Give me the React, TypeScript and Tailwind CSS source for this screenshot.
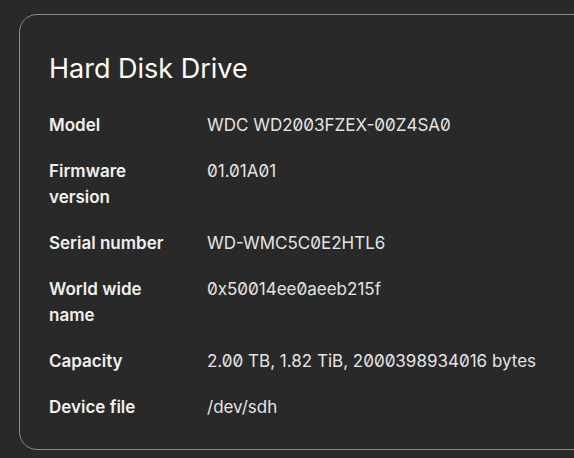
import React from 'react';

const rows: { label: string; value: string }[] = [
  { label: 'Model', value: 'WDC WD2003FZEX-00Z4SA0' },
  { label: 'Firmware version', value: '01.01A01' },
  { label: 'Serial number', value: 'WD-WMC5C0E2HTL6' },
  { label: 'World wide name', value: '0x50014ee0aeeb215f' },
  { label: 'Capacity', value: '2.00 TB, 1.82 TiB, 2000398934016 bytes' },
  { label: 'Device file', value: '/dev/sdh' },
];

export default function App() {
  return (
    <div className="w-[574px] h-[458px] overflow-hidden bg-[#292929] pt-[14px] pl-[19px] font-['Inter',sans-serif]">
      <div className="w-[600px] h-[436px] rounded-[18px] border border-[#8a8a8a] pl-[29px] pt-[36px]">
        <h2 className="text-[27px] leading-[36px] text-white font-normal mb-[25px]">Hard Disk Drive</h2>
        <dl className="flex flex-col gap-[20px]">
          {rows.map((r) => (
            <div key={r.label} className="flex text-[17px] leading-[26px]">
              <dt className="w-[158px] pr-[32px] font-semibold text-[#f0f0f0]">{r.label}</dt>
              <dd className="text-[#e4e4e4] slashed-zero">{r.value}</dd>
            </div>
          ))}
        </dl>
      </div>
    </div>
  );
}
